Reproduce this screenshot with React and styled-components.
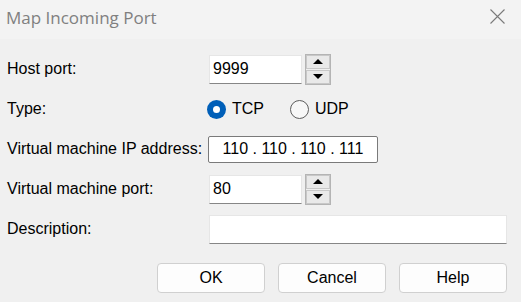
import styled, { createGlobalStyle } from "styled-components";

const GlobalStyle = createGlobalStyle`
  html, body {
    margin: 0;
    padding: 0;
    background: #f0f0f0;
  }
  body {
    font-family: "Liberation Sans", Arial, sans-serif;
  }
`;

const Dialog = styled.div`
  width: 521px;
  height: 302px;
  background: #f0f0f0;
  display: flex;
  flex-direction: column;
  overflow: hidden;
`;

const TitleBar = styled.div`
  height: 39px;
  background: #f3f3f3;
  display: flex;
  align-items: center;
  justify-content: space-between;
  padding: 0 16px 0 6px;
  box-sizing: border-box;
`;

const Title = styled.span`
  font-family: "Open Sans", "Noto Sans", sans-serif;
  font-size: 17px;
  color: #808080;
  margin-top: -4px;
`;

const CloseIcon = styled.svg`
  width: 15px;
  height: 15px;
  margin-top: -6px;
`;

const Form = styled.div`
  display: grid;
  grid-template-columns: 202px 1fr;
  grid-auto-rows: 40px;
  align-items: center;
  padding: 10px 14px 0 7px;
`;

const Label = styled.span`
  font-size: 16px;
  color: #000;
`;

const Spin = styled.div`
  display: flex;
  align-items: center;
  gap: 3px;
`;

const Field = styled.div`
  width: ${(p) => p.$width || 93}px;
  height: 29px;
  background: #fff;
  box-sizing: border-box;
  border: 1px solid #e6e6e6;
  border-bottom: 1px solid #868686;
  display: flex;
  align-items: center;
  padding-left: 3px;
  font-size: 16px;
  color: #000;
`;

const SpinFrame = styled.div`
  width: 26px;
  height: 31px;
  box-sizing: border-box;
  border: 1px solid #b4b4b4;
  background: #f0f0f0;
  display: flex;
  flex-direction: column;
  gap: 1px;
`;

const SpinButton = styled.div`
  flex: 1;
  border: 1px solid #c8c8c8;
  background: #e9e9e9;
  display: flex;
  align-items: center;
  justify-content: center;
`;

const Arrow = styled.span`
  width: 0;
  height: 0;
  border-left: 5px solid transparent;
  border-right: 5px solid transparent;
  ${(p) =>
    p.$down
      ? "border-top: 5px solid #000;"
      : "border-bottom: 5px solid #000;"}
`;

const RadioGroup = styled.div`
  display: flex;
  align-items: center;
  gap: 26px;
  margin-left: -2px;
`;

const RadioOption = styled.label`
  display: flex;
  align-items: center;
  gap: 6px;
  font-size: 16px;
  color: #000;
`;

const RadioDot = styled.span`
  width: 19px;
  height: 19px;
  border-radius: 50%;
  box-sizing: border-box;
  display: flex;
  align-items: center;
  justify-content: center;
  ${(p) =>
    p.$checked
      ? "background: #005fb8;"
      : "border: 1px solid #5d5d5d; background: #f7f7f7;"}
  &::after {
    content: "";
    width: 7px;
    height: 7px;
    border-radius: 50%;
    background: ${(p) => (p.$checked ? "#fff" : "transparent")};
  }
`;

const IpBox = styled.div`
  width: 170px;
  height: 27px;
  box-sizing: border-box;
  border: 1px solid #7a7a7a;
  border-radius: 2px;
  background: #fff;
  display: flex;
  align-items: center;
  justify-content: center;
  font-size: 16px;
  color: #000;
  white-space: pre;
  margin-left: -1px;
`;

const Buttons = styled.div`
  display: flex;
  justify-content: flex-end;
  gap: 13px;
  padding: 14px 14px 0 0;
`;

const Button = styled.button`
  width: 108px;
  height: 30px;
  border: 1px solid #d0d0d0;
  border-radius: 4px;
  background: #fdfdfd;
  font-family: "Liberation Sans", Arial, sans-serif;
  font-size: 16px;
  color: #000;
  padding: 0;
`;

const Spinner = ({ value }) => (
  <Spin>
    <Field>{value}</Field>
    <SpinFrame>
      <SpinButton>
        <Arrow />
      </SpinButton>
      <SpinButton>
        <Arrow $down />
      </SpinButton>
    </SpinFrame>
  </Spin>
);

const App = () => (
  <Dialog>
    <GlobalStyle />
    <TitleBar>
      <Title>Map Incoming Port</Title>
      <CloseIcon viewBox="0 0 15 15">
        <path d="M0.5 0.5 L14.5 14.5 M14.5 0.5 L0.5 14.5" stroke="#7a7a7a" strokeWidth="1.1" fill="none" />
      </CloseIcon>
    </TitleBar>
    <Form>
      <Label>Host port:</Label>
      <Spinner value="9999" />

      <Label>Type:</Label>
      <RadioGroup>
        <RadioOption>
          <RadioDot $checked />
          TCP
        </RadioOption>
        <RadioOption>
          <RadioDot />
          UDP
        </RadioOption>
      </RadioGroup>

      <Label>Virtual machine IP address:</Label>
      <IpBox>{"110 . 110 . 110 . 111"}</IpBox>

      <Label>Virtual machine port:</Label>
      <Spinner value="80" />

      <Label>Description:</Label>
      <Field $width={298} />
    </Form>
    <Buttons>
      <Button>OK</Button>
      <Button>Cancel</Button>
      <Button>Help</Button>
    </Buttons>
  </Dialog>
);

export default App;
